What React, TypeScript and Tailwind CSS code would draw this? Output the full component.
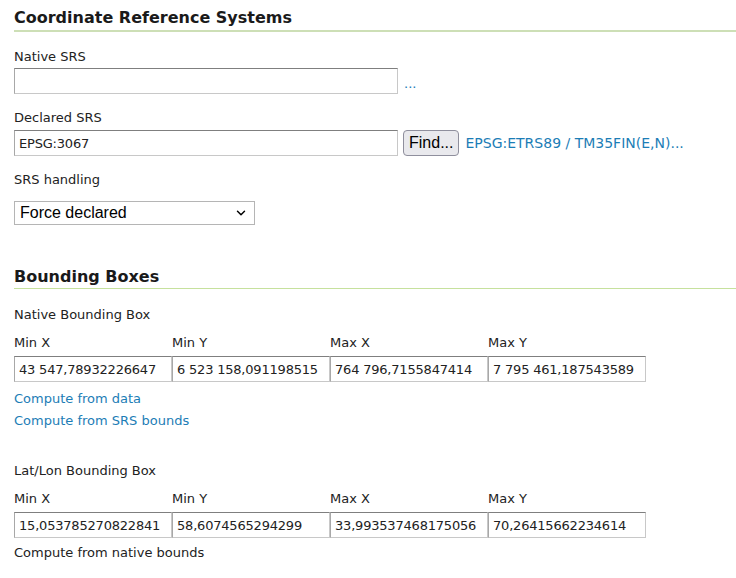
import { ChevronDown } from "lucide-react"

const inputCls =
  "h-[26px] border border-[#c8c8c8] border-t-[#7f7f7f] border-l-[#a8a8a8] bg-white px-[4px] text-[13px] tracking-[-0.2px] text-[#222] outline-none"

function BBox({ values }: { values: string[] }) {
  const labels = ["Min X", "Min Y", "Max X", "Max Y"]
  return (
    <div className="mt-[12px]">
      <div className="flex">
        {labels.map((l) => (
          <div key={l} className="w-[158px] text-[13px] leading-[16px]">{l}</div>
        ))}
      </div>
      <div className="mt-[5px] flex">
        {values.map((v, i) => (
          <input key={i} readOnly value={v} className={inputCls + " w-[158px]"} />
        ))}
      </div>
    </div>
  )
}

export default function App() {
  return (
    <div className="bg-white pl-[14px] pt-[7px] text-[#222]" style={{ fontFamily: '"DejaVu Sans", Verdana, sans-serif' }}>
      <h2 className="pb-[1px] text-[16px] font-bold leading-[22px] text-[#1a1a1a]">Coordinate Reference Systems</h2>
      <div className="h-[2px] bg-[#cddfb6]"></div>

      <div className="mt-[17px] text-[13px] leading-[16px]">Native SRS</div>
      <div className="mt-[3px] flex items-center">
        <input readOnly value="" className={inputCls + " w-[384px]"} />
        <a className="ml-[6px] mt-[6px] text-[13px] text-[#1c7db6]">...</a>
      </div>

      <div className="mt-[16px] text-[13px] leading-[16px]">Declared SRS</div>
      <div className="mt-[4px] flex items-center">
        <input readOnly value="EPSG:3067" className={inputCls + " w-[384px]"} />
        <button className="ml-[5px] h-[26px] rounded-[4px] border border-[#8f8f9d] bg-[#e9e9ed] px-[5px] text-[16px] leading-[20px] text-black" style={{ fontFamily: '"Liberation Sans", Arial, sans-serif' }}>
          Find...
        </button>
        <a className="ml-[6px] text-[14px] text-[#1c7db6]">EPSG:ETRS89 / TM35FIN(E,N)...</a>
      </div>

      <div className="mt-[16px] text-[13px] leading-[16px]">SRS handling</div>
      <div className="mt-[13px] flex h-[24px] w-[241px] items-center justify-between border border-[#b5b5b5] bg-white pl-[5px] pr-[6px]">
        <span className="text-[16px] text-black" style={{ fontFamily: '"Liberation Sans", Arial, sans-serif' }}>Force declared</span>
        <ChevronDown size={14} strokeWidth={2.5} className="text-black" />
      </div>

      <h2 className="mt-[41px] pb-[0px] text-[16px] font-bold leading-[22px] text-[#1a1a1a]">Bounding Boxes</h2>
      <div className="h-[1px] bg-[#c6e19d]"></div>

      <div className="mt-[18px] text-[13px] leading-[16px]">Native Bounding Box</div>
      <BBox values={["43 547,78932226647", "6 523 158,091198515", "764 796,7155847414", "7 795 461,187543589"]} />
      <div className="mt-[6px] text-[13px] leading-[22px] text-[#1c7db6]">
        <div>Compute from data</div>
        <div>Compute from SRS bounds</div>
      </div>

      <div className="mt-[31px] text-[13px] leading-[16px]">Lat/Lon Bounding Box</div>
      <BBox values={["15,053785270822841", "58,6074565294299", "33,993537468175056", "70,26415662234614"]} />
      <div className="mt-[7px] pb-[20px] text-[13px] leading-[16px]">Compute from native bounds</div>
    </div>
  )
}
